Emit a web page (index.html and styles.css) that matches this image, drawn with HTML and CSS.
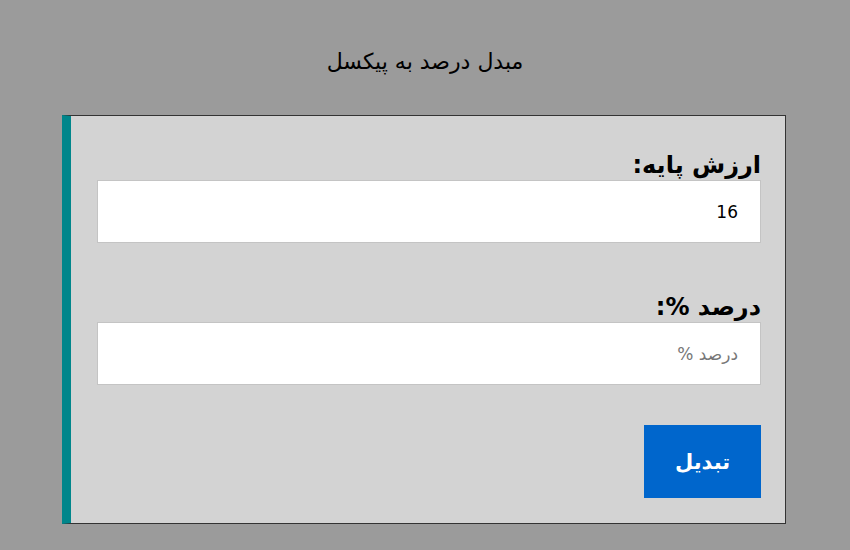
FILE: index.html
```html
<!DOCTYPE html>
<html lang="fa" dir="rtl">
<head>
<meta charset="utf-8">
<title>مبدل درصد به پیکسل</title>
<link rel="stylesheet" href="styles.css">
</head>
<body>
<h1 class="title">مبدل درصد به پیکسل</h1>
<div class="card">
  <label class="label" for="base">ارزش پایه:</label>
  <input class="field" id="base" type="text" value="16">
  <label class="label label-gap" for="pct">درصد %:</label>
  <input class="field" id="pct" type="text" placeholder="درصد %">
  <button class="btn" type="button">تبدیل</button>
</div>
</body>
</html>
```
FILE: styles.css
```css
html, body {
  margin: 0;
  padding: 0;
  background: #9b9b9b;
  font-family: "DejaVu Sans", sans-serif;
}
body {
  height: 550px;
  overflow: hidden;
}
.title {
  margin: 0;
  padding-top: 47px;
  height: 115px;
  box-sizing: border-box;
  text-align: center;
  font-size: 22px;
  font-weight: normal;
  line-height: 30px;
  color: #000;
}
.card {
  box-sizing: border-box;
  width: 724px;
  height: 409px;
  margin: 0 auto 0 auto;
  position: relative;
  left: -1px;
  background: #d3d3d3;
  border: 1px solid #333;
  border-left: 9px solid #00868b;
  padding: 34px 24px 25px 26px;
  display: flex;
  flex-direction: column;
  align-items: stretch;
}
.label {
  display: block;
  font-size: 24px;
  font-weight: bold;
  line-height: 30px;
  color: #000;
}
.label-gap {
  margin-top: 49px;
}
.field {
  box-sizing: border-box;
  height: 63px;
  border: 1px solid #c4c4c4;
  background: #fff;
  padding: 0 22px;
  font-family: "DejaVu Sans", sans-serif;
  font-size: 17px;
  color: #000;
  direction: rtl;
  outline: none;
}
.field::placeholder {
  color: #777;
}
.btn {
  align-self: flex-start;
  margin-top: 40px;
  width: 117px;
  height: 73px;
  border: none;
  background: #0066cc;
  color: #fff;
  font-family: "DejaVu Sans", sans-serif;
  font-size: 21px;
  font-weight: bold;
}
```
